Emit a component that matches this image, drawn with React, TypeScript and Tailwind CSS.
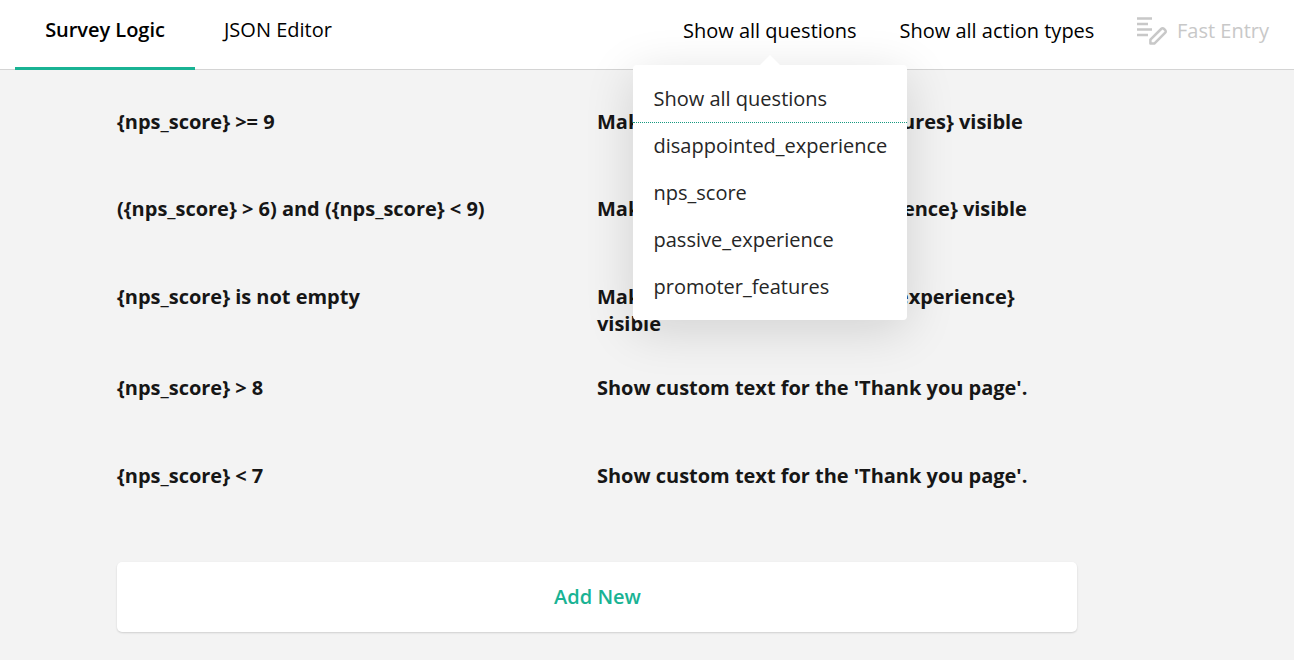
import React from "react";

const rules: { when: string; then: string; height: string }[] = [
  { when: "{nps_score} >= 9", then: "Make question {promoter_features} visible", height: "h-[87px]" },
  { when: "({nps_score} > 6) and ({nps_score} < 9)", then: "Make question {passive_experience} visible", height: "h-[88px]" },
  { when: "{nps_score} is not empty", then: "Make question {disappointed_experience} visible", height: "h-[91px]" },
  { when: "{nps_score} > 8", then: "Show custom text for the 'Thank you page'.", height: "h-[88px]" },
  { when: "{nps_score} < 7", then: "Show custom text for the 'Thank you page'.", height: "h-[99px]" },
];

const questions = ["disappointed_experience", "nps_score", "passive_experience", "promoter_features"];

function FastEntryIcon() {
  return (
    <svg className="h-8 w-8 shrink-0" viewBox="0 0 32 32" fill="none" stroke="#c8c8c8" strokeWidth="2.5">
      <path d="M1 3.4h15M1 9h11M1 14.6h15M1 20h11" />
      <path strokeLinejoin="round" d="M14.4 28.6v-3.9L25.1 14q1.5-1.5 3 0l.9.9q1.5 1.5 0 3L18.3 28.6z" />
    </svg>
  );
}

function QuestionMenu() {
  return (
    <div className="absolute left-[-50px] top-[65px] z-10 h-[255px] w-[274px] rounded bg-white pt-2.5 text-[#262626] shadow-[0_10px_50px_rgba(0,0,0,0.14)]">
      <svg className="absolute left-[127px] top-[-10px] h-[10px] w-5" viewBox="0 0 20 10" fill="#fff"><path d="M0 10L10 0l10 10z" /></svg>
      <div className="h-[48px] border-b border-dotted border-[#169a80] pl-[20.5px] leading-[47px]">Show all questions</div>
      {questions.map((q) => (
        <div key={q} className="h-[47px] pl-[20.5px] leading-[45px]">{q}</div>
      ))}
    </div>
  );
}

export default function App() {
  return (
    <div className="h-[660px] w-[1294px] overflow-hidden bg-[#f3f3f3] font-['Open_Sans',sans-serif] text-[20px] text-[#161616]">
      <header className="flex h-[70px] border-b border-[#d4d4d4] bg-white leading-[60px] text-black">
        <div className="ml-[15px] h-[70px] w-[180px] border-b-3 border-[#19b394] text-center font-semibold tracking-[-0.03px]">Survey Logic</div>
        <div className="ml-[29px] w-[459px]">JSON Editor</div>
        <div className="relative w-[216.5px] leading-[62px]">
          Show all questions
          <QuestionMenu />
        </div>
        <div className="w-[236.5px] leading-[62px]">Show all action types</div>
        <div className="flex gap-[9px] leading-[62px] text-[#c8c8c8]">
          <div className="pt-[15px]"><FastEntryIcon /></div>
          Fast Entry
        </div>
      </header>
      <main className="ml-[117px] w-[960px] pt-[38px]">
        {rules.map((r) => (
          <div key={r.when} className={`flex font-bold leading-[27px] tracking-[-0.02px] ${r.height}`}>
            <div className="w-[480px]">{r.when}</div>
            <div className="w-[450px]">{r.then}</div>
          </div>
        ))}
        <button className="mt-[1px] block h-[70px] w-full rounded-[5px] bg-white pl-px font-semibold text-[#19b394] shadow-[0_1px_2px_rgba(0,0,0,0.15)]">Add New</button>
      </main>
    </div>
  );
}
